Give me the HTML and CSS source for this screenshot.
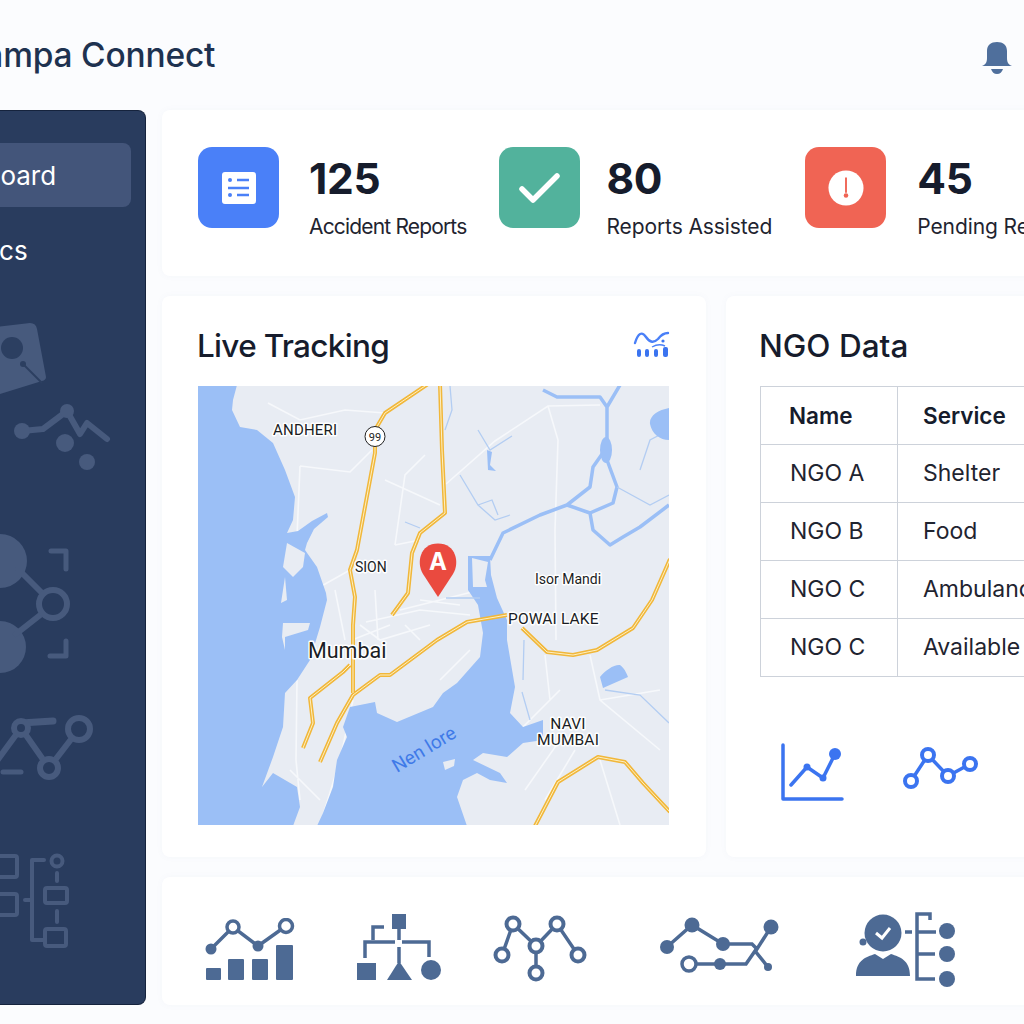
FILE: index.html
```html
<!DOCTYPE html>
<html lang="en">
<head>
<meta charset="utf-8">
<title>Champa Connect</title>
<link rel="stylesheet" href="styles.css">
</head>
<body>
<div class="app">
  <header class="topbar">
    <h1 class="brand">Champa Connect</h1>
    <svg class="bell" viewBox="980 40 34 36" aria-hidden="true">
      <path class="bell-body" d="M982 66c3-1 5-3 5-8v-7c0-6 4-9 10-9s10 3 10 9v7c0 5 2 7 5 8z"/>
      <path class="bell-clap" d="M991 69h12c-1 3-3 5-6 5s-5-2-6-5z"/>
    </svg>
  </header>
  <div class="layout">
    <aside class="sidebar">
      <nav class="nav">
        <a class="nav-item nav-active">Dashboard</a>
        <a class="nav-item nav-second">Analytics</a>
      </nav>
      <svg class="side-art" viewBox="-100 290 246 715" aria-hidden="true">
        <path class="sa-fill" d="M-40 330 L30 322 Q36 322 37 328 L46 376 Q46 379 42 380 L0 393 L-40 398z"/>
        <circle class="sa-dark" cx="12" cy="347" r="11"/>
        <circle class="sa-dark" cx="23" cy="363" r="3"/>
        <path class="sa-darkline" d="M23 363 42 382"/>
        <path class="sa-line" stroke-width="6" d="M22 430 43 428 67 410 80 433 87 422 107 438"/>
        <circle class="sa-fill" cx="22" cy="430" r="8"/>
        <circle class="sa-fill" cx="67" cy="410" r="7"/>
        <circle class="sa-fill" cx="65" cy="442" r="9"/>
        <circle class="sa-fill" cx="87" cy="461" r="8"/>

        <circle class="sa-fill" cx="0" cy="560" r="27"/>
        <circle class="sa-fill" cx="0" cy="646" r="26"/>
        <path class="sa-line" stroke-width="6" d="M18 568 44 594M16 633 44 611"/>
        <circle class="sa-ring" stroke-width="6" cx="53" cy="603" r="14"/>
        <path class="sa-line" stroke-width="5" d="M51 550H66V568M66 640V655H50"/>

        <path class="sa-line" stroke-width="6" d="M-12 772 21 727 49 767 79 728"/>
        <path class="sa-line" stroke-width="7" d="M21 722 53 720"/>
        <path class="sa-line" stroke-width="5" d="M3 771H21"/>
        <circle class="sa-ring" stroke-width="6" cx="21" cy="727" r="7"/>
        <circle class="sa-ring" stroke-width="6" cx="49" cy="767" r="9"/>
        <circle class="sa-ring" stroke-width="6" cx="79" cy="728" r="11"/>

        <rect class="sa-ring" stroke-width="4" x="-12" y="855" width="29" height="21" rx="2"/>
        <rect class="sa-ring" stroke-width="4" x="-12" y="893" width="29" height="21" rx="2"/>
        <path class="sa-line" stroke-width="4" d="M44 859H32V939H43M25 899H32M57 872V880M57 910V921"/>
        <circle class="sa-ring" stroke-width="4" cx="57" cy="860" r="5.5"/>
        <rect class="sa-ring" stroke-width="4" x="45" y="887" width="22" height="15" rx="2"/>
        <rect class="sa-ring" stroke-width="4" x="45" y="928" width="21" height="17" rx="2"/>
      </svg>
    </aside>

    <main class="main">
      <section class="card stats">
        <div class="stat">
          <div class="stat-icon icon-blue">
            <svg class="stat-svg" viewBox="0 0 36 36" aria-hidden="true">
              <rect class="g-white" x="1" y="2" width="34" height="32" rx="3"/>
              <circle class="g-blue" cx="9" cy="10" r="2"/>
              <circle class="g-blue" cx="9" cy="25" r="2"/>
              <path class="l-blue" d="M16 10H28M7 18H28M16 25H28"/>
            </svg>
          </div>
          <div class="stat-text">
            <div class="stat-num">125</div>
            <div class="stat-label label-tight">Accident Reports</div>
          </div>
        </div>
        <div class="stat stat-b">
          <div class="stat-icon icon-green">
            <svg class="stat-svg stat-svg-lg" viewBox="0 0 44 36" aria-hidden="true">
              <path class="l-check" d="M4 19 15 30 39 6"/>
            </svg>
          </div>
          <div class="stat-text">
            <div class="stat-num">80</div>
            <div class="stat-label">Reports Assisted</div>
          </div>
        </div>
        <div class="stat stat-c">
          <div class="stat-icon icon-red">
            <svg class="stat-svg" viewBox="0 0 38 38" aria-hidden="true">
              <circle class="g-white" cx="19" cy="19" r="18.5"/>
              <path class="l-red" d="M19 8V24"/>
              <circle class="g-red" cx="19" cy="27" r="2.4"/>
            </svg>
          </div>
          <div class="stat-text">
            <div class="stat-num">45</div>
            <div class="stat-label">Pending Reports</div>
          </div>
        </div>
      </section>

      <div class="panels">
        <section class="card live">
          <div class="live-head">
            <h2 class="panel-title live-title">Live Tracking</h2>
            <svg class="live-icon" viewBox="632 332 38 30" aria-hidden="true">
              <path class="l-wave" d="M634 345C637 335 641 333 645 339C649 345 653 345 657 341C660 337 663 335 667 335"/>
              <path class="l-wave-s" d="M651 349C656 346 660 346 664 348"/>
              <circle class="g-accent" cx="662" cy="343" r="1.6"/>
              <rect class="g-accent" x="636" y="351" width="4" height="8" rx="2"/>
              <rect class="g-accent" x="644" y="351" width="4" height="8" rx="2"/>
              <rect class="g-accent" x="653" y="351" width="4" height="8" rx="2"/>
              <rect class="g-accent" x="662" y="349" width="5" height="10" rx="2"/>
            </svg>
          </div>
          <svg class="map" viewBox="198 386 471 439" role="img" aria-label="Map of Mumbai">
            <defs>
              <g id="roads">
                <path d="M428 384 385 413 375 430 375 453 357 550 350 570 355 597 353 625V693"/>
                <path d="M440 384 442 450 445 513 420 533 412 553 408 593 392 615"/>
                <path d="M507 615 467 622 437 640 390 675H380L353 695 337 723 320 762"/>
                <path d="M350 665 343 672 310 698 313 723 303 748"/>
                <path d="M522 628 547 652 573 655 597 650 633 628 652 600 670 559"/>
                <path d="M535 826 558 782 598 757 625 762 643 783 670 812"/>
              </g>
            </defs>
            <rect class="m-land" x="198" y="386" width="471" height="439"/>
            <path class="m-road-w" d="M446 484 495 441 548 406 600 405M548 406 558 440 555 530 556 640M268 403 300 420 345 410 385 413M300 466 350 472 372 450M425 455 405 475 395 545M395 545 420 540M385 480 440 505M300 466 296 560M350 570 318 588M366 622 420 610 470 615M352 640 390 625M400 610 480 590M297 680 296 760 300 800M353 700 340 760 320 825M545 655 550 700M590 655 600 700 660 750M545 800 575 750M600 760 620 825M600 700 660 690M360 625 380 640 430 625M335 590 345 640M375 590 378 640M420 600 460 605M405 625 420 640M290 770 320 800M470 650 440 680M510 740 560 690M525 790 560 740"/>
            <path class="m-water" d="M197 385H237L233 400 232 410 240 427 257 430 273 443 285 470 295 497 293 520 287 533 298 531 312 521 327 513 328 517 314 529 307 543 305 550 317 567 326 593 327 600 320 627 310 660 297 680 285 693 283 727 273 757 262 787 273 773 297 787 300 807 293 826H197z"/>
            <path class="m-land" d="M287 543 305 553 303 567 293 577 283 567z"/>
            <path class="m-land" d="M285 577 287 600 281 603z"/>
            <path class="m-land" d="M283 623 310 623 308 630 285 637 285 650 282 637z"/>
            <path class="m-water" d="M468 556 490 556 491 575 497 598 507 620 507 640 515 687 510 713 523 727 543 720 543 740 523 743 507 757 483 753 473 760 500 773 507 783 490 780 477 773 463 780 457 797 467 826H317L323 813 333 787 337 760 347 737 343 727 350 707 375 702 377 713 397 722 433 707 443 693 457 683 480 657 483 633 478 605 468 590Z"/>
            <path class="m-land" d="M472 558 488 562 485 580 487 587 473 587z"/>
            <path class="m-land" d="M443 762 455 759 454 766 445 770z"/>
            <path class="m-water-s" d="M490 560 503 533 540 515 567 505 590 487 593 467 607 447 607 407M567 505 590 513 613 503 617 487 607 460M590 513 593 530 610 545 623 537 640 527 669 505M543 390 557 397 600 397 607 407 620 385"/>
            <ellipse class="m-water" cx="606" cy="450" rx="6" ry="13"/>
            <path class="m-water-t" d="M460 475 478 505 495 520 510 515M478 505 492 500 498 515M445 430 452 410 450 386M478 430 490 450 512 436M617 487 650 505 669 495M640 470 650 440 669 430M405 522 420 528M446 598 480 598M524 640 523 680M522 692 530 720M605 690 640 695 669 723"/>
            <path class="m-water" d="M487 450 492 452 490 465 496 471 488 470zM669 408C658 410 649 416 650 424 652 434 660 440 669 440zM600 677C605 670 615 664 620 665 625 668 628 677 628 677L603 688z"/>
            <use href="#roads" class="m-road-o"/>
            <use href="#roads" class="m-road-i"/>
            <text class="m-label m-andheri" x="273" y="435">ANDHERI</text>
            <circle class="m-badge" cx="375" cy="436.500" r="10"/>
            <text class="m-badge-t" x="375" y="440.500">99</text>
            <text class="m-label m-sm" x="355" y="572">SION</text>
            <text class="m-label m-sm" x="535" y="584">Isor Mandi</text>
            <text class="m-label m-md" x="508" y="624">POWAI LAKE</text>
            <text class="m-label m-big" x="308" y="658">Mumbai</text>
            <text class="m-label m-md m-mid" x="568" y="729">NAVI</text>
            <text class="m-label m-md m-mid" x="568" y="745">MUMBAI</text>
            <text class="m-sea" transform="translate(397 773) rotate(-31)">Nen lore</text>
            <path class="m-pin" d="M438 597 423 574C416 563 420 543.500 438 543.500S460 563 453 574Z"/>
            <text class="m-pin-t" x="438" y="570">A</text>
          </svg>
        </section>

        <section class="card ngo">
          <h2 class="panel-title ngo-title">NGO Data</h2>
          <table class="table">
            <thead>
              <tr><th class="col-a">Name</th><th class="col-b">Service</th></tr>
            </thead>
            <tbody>
              <tr><td>NGO A</td><td>Shelter</td></tr>
              <tr><td>NGO B</td><td>Food</td></tr>
              <tr><td>NGO C</td><td>Ambulance</td></tr>
              <tr><td>NGO C</td><td>Available</td></tr>
            </tbody>
          </table>
          <div class="mini-charts">
            <svg class="mini-a" viewBox="780 742 65 60" aria-hidden="true">
              <path class="l-accent" d="M783 745V799H842"/>
              <path class="l-accent-t" d="M791 785 807 767 823 778 835 754"/>
              <circle class="g-accent" cx="807" cy="767" r="3.500"/>
              <circle class="g-accent" cx="823" cy="778" r="3.500"/>
              <circle class="g-accent" cx="835" cy="754" r="6"/>
            </svg>
            <svg class="mini-b" viewBox="902 745 78 46" aria-hidden="true">
              <path class="l-accent" d="M911 781 928 755 948 776 970 764"/>
              <circle class="ring-accent" cx="911" cy="781" r="6"/>
              <circle class="ring-accent" cx="928" cy="755" r="6"/>
              <circle class="ring-accent" cx="948" cy="776" r="6"/>
              <circle class="ring-accent" cx="970" cy="764" r="6"/>
            </svg>
          </div>
        </section>
      </div>

      <section class="card tools">
        <svg class="t1" viewBox="205 918 90 64" aria-hidden="true">
          <rect class="g-slate" x="206" y="968" width="15" height="12" rx="1"/>
          <rect class="g-slate" x="228" y="959" width="16" height="21" rx="1"/>
          <rect class="g-slate" x="252" y="959" width="16" height="21" rx="1"/>
          <rect class="g-slate" x="276" y="945" width="17" height="35" rx="1"/>
          <path class="l-slate" d="M211 949 233 927 258 946 286 926"/>
          <circle class="g-slate" cx="211" cy="949" r="5.500"/>
          <circle class="g-slate" cx="258" cy="946" r="5.500"/>
          <circle class="ring-slate" cx="233" cy="927" r="6"/>
          <circle class="ring-slate" cx="286" cy="926" r="6.500"/>
        </svg>
        <svg class="t2" viewBox="356 912 86 70" aria-hidden="true">
          <rect class="g-slate" x="392" y="914" width="14" height="15"/>
          <path class="l-slate" d="M399 929V940M395 942H365V958M402 942H429V957M373 940V927H384M399 947V963"/>
          <rect class="g-slate" x="357" y="963" width="19" height="17"/>
          <path class="g-slate" d="M399 961 412 980H387z"/>
          <circle class="g-slate" cx="431" cy="970" r="10"/>
        </svg>
        <svg class="t3" viewBox="493 914 95 68" aria-hidden="true">
          <path class="l-slate" d="M502 955 513 924 536 946 557 924 578 955M536 946V973"/>
          <circle class="ring-slate ring-thick" cx="513" cy="924" r="6.500"/>
          <circle class="ring-slate ring-thick" cx="502" cy="955" r="6.500"/>
          <circle class="ring-slate ring-thick" cx="536" cy="946" r="6.500"/>
          <circle class="ring-slate ring-thick" cx="557" cy="924" r="6.500"/>
          <circle class="ring-slate ring-thick" cx="578" cy="955" r="6.500"/>
          <circle class="ring-slate ring-thick" cx="536" cy="973" r="6.500"/>
        </svg>
        <svg class="t4" viewBox="659 916 121 58" aria-hidden="true">
          <path class="l-slate" d="M667 947 692 925 723 944H752L757 949 771 927"/>
          <path class="l-slate" d="M689 964H746L755 951 768 967"/>
          <circle class="g-slate" cx="667" cy="947" r="7"/>
          <circle class="g-slate" cx="692" cy="925" r="7.500"/>
          <circle class="g-slate" cx="723" cy="944" r="7"/>
          <circle class="g-slate" cx="771" cy="927" r="7.500"/>
          <circle class="ring-slate" cx="689" cy="964" r="7"/>
          <circle class="g-slate" cx="720" cy="964" r="6"/>
          <circle class="g-slate" cx="768" cy="967" r="4"/>
        </svg>
        <svg class="t5" viewBox="855 912 102 76" aria-hidden="true">
          <circle class="g-slate" cx="883" cy="933" r="18.500"/>
          <circle class="g-slate" cx="863" cy="942" r="3.500"/>
          <path class="l-white" d="M876 933 882 938 890 928"/>
          <path class="g-slate" d="M856 976C856 960 866 957 875 954L883 959 891 954C900 957 910 960 910 976Z"/>
          <path class="l-slate" d="M930 920V914H917V979H935M917 932H936M905 932H912M917 954H935"/>
          <circle class="g-slate" cx="947" cy="931" r="8"/>
          <circle class="g-slate" cx="947" cy="954" r="8"/>
          <circle class="g-slate" cx="947" cy="979" r="8"/>
        </svg>
      </section>
    </main>
  </div>
</div>
</body>
</html>
```

FILE: styles.css
```css
* { box-sizing: border-box; }
html, body { margin: 0; padding: 0; }
body {
  background: #fbfcfe;
  font-family: Inter, "Noto Sans", sans-serif;
  color: #161c2c;
}
svg { display: block; }

.app { width: 1024px; height: 1024px; overflow: hidden; background: #fbfcfe; }

/* top bar */
.topbar {
  height: 110px;
  display: flex;
  align-items: center;
  justify-content: space-between;
  padding-right: 10px;
}
.brand {
  margin: 0 0 0 -60px;
  font-size: 33.500px;
  font-weight: 500;
  letter-spacing: -0.2px;
  color: #1e3250;
  white-space: nowrap;
}
.bell { width: 34px; height: 36px; margin-top: 6px; }
.bell-body { fill: #4f6f9c; }
.bell-clap { fill: #4f6f9c; }

/* layout */
.layout { display: flex; gap: 16px; margin-left: -100px; }

/* sidebar */
.sidebar {
  flex: none;
  width: 246px;
  height: 895px;
  background: #293c5e;
  border-radius: 8px;
  border-right: 1px solid #15233d;
  border-bottom: 1px solid #15233d;
  border-top: 1px solid #15233d;
  padding-top: 32px;
  overflow: hidden;
}
.nav { display: flex; flex-direction: column; gap: 11px; padding-right: 14px; }
.nav-item {
  display: flex;
  align-items: center;
  height: 64px;
  padding-left: 22px;
  border-radius: 8px;
  color: #fff;
  font-size: 26px;
}
.nav-second { padding-left: 15px; }
.nav-active { background: #43557a; }
.side-art { width: 246px; height: 715px; margin-top: 9px; }
.sa-fill { fill: #475a7d; }
.sa-dark { fill: #2c3f61; }
.sa-darkline { stroke: #2c3f61; stroke-width: 2; fill: none; }
.sa-line { fill: none; stroke: #475a7d; stroke-linecap: round; stroke-linejoin: round; }
.sa-ring { fill: #293c5e; stroke: #475a7d; }

/* main */
.main { flex: none; width: 1000px; display: flex; flex-direction: column; gap: 20px; }
.card { background: #fff; border-radius: 8px; box-shadow: 0 0 6px rgba(120, 140, 180, .05); }

/* stats */
.stats { height: 166px; display: flex; align-items: flex-start; gap: 33px; padding: 37px 0 0 36px; }
.stat { display: flex; align-items: flex-start; gap: 30px; white-space: nowrap; flex: none; }
.stat-b { gap: 26px; }
.stat-c { gap: 31px; }
.stat-icon {
  width: 81px;
  height: 81px;
  border-radius: 14px;
  display: flex;
  align-items: center;
  justify-content: center;
  flex: none;
}
.icon-blue { background: #4a80f8; }
.icon-green { background: #52b29c; }
.icon-red { background: #f06454; }
.stat-svg { width: 36px; height: 36px; }
.stat-svg-lg { width: 44px; height: 36px; }
.stat-text { padding-top: 5px; }
.stat-num { font-size: 42.500px; font-weight: 700; line-height: 54px; letter-spacing: -0.3px; color: #161c2c; }
.stat-label { font-size: 21px; font-weight: 400; line-height: 30px; margin-top: 6px; color: #1f2430; letter-spacing: -0.1px; }
.label-tight { letter-spacing: -0.83px; }
.g-white { fill: #fff; }
.g-blue { fill: #4a80f8; }
.g-red { fill: #f06454; }
.l-blue { fill: none; stroke: #4a80f8; stroke-width: 2.4; }
.l-check { fill: none; stroke: #fff; stroke-width: 5.5; stroke-linecap: round; stroke-linejoin: round; }
.l-red { fill: none; stroke: #f06454; stroke-width: 2; }

/* panels */
.panels { display: flex; gap: 20px; height: 561px; }
.live { flex: none; width: 544px; padding: 0 36px; }
.live-head { height: 90px; display: flex; align-items: center; justify-content: space-between; padding-top: 8px; }
.panel-title { margin: 0; margin-left: -1px; font-size: 31.500px; font-weight: 500; color: #161c2c; white-space: nowrap; }
.live-title { letter-spacing: -0.7px; }
.live-icon { width: 38px; height: 30px; margin-right: -1px; }
.l-wave { fill: none; stroke: #4a80f8; stroke-width: 2.4; stroke-linecap: round; }
.l-wave-s { fill: none; stroke: #4a80f8; stroke-width: 1.4; }
.g-accent { fill: #3b74f0; }

/* map */
.map { width: 471px; height: 439px; }
.m-land { fill: #e8ecf3; }
.m-water { fill: #9bbff6; }
.m-water-s { fill: none; stroke: #9bbff6; stroke-width: 3.500; stroke-linejoin: round; }
.m-water-t { fill: none; stroke: #b3cdf2; stroke-width: 1.300; }
.m-road-w { fill: none; stroke: #f6f8fb; stroke-width: 1.600; }
.m-road-o { fill: none; stroke: #f1b73a; stroke-width: 4; stroke-linejoin: round; }
.m-road-i { fill: none; stroke: #fdf0c4; stroke-width: 1; stroke-linejoin: round; }
.m-label {
  font-family: Roboto, Inter, sans-serif;
  fill: #1a1d24;
  paint-order: stroke;
  stroke: #fff;
  stroke-width: 3px;
  stroke-linejoin: round;
}
.m-andheri { font-size: 15px; letter-spacing: .2px; }
.m-sm { font-size: 14px; }
.m-md { font-size: 15.500px; letter-spacing: .15px; }
.m-mid { text-anchor: middle; }
.m-big { font-size: 21.500px; }
.m-badge { fill: #fff; stroke: #222; stroke-width: 1; }
.m-badge-t { font-family: Roboto, sans-serif; font-size: 11px; fill: #222; text-anchor: middle; }
.m-sea { font-family: Roboto, sans-serif; font-size: 19px; fill: #3f7ae8; }
.m-pin { fill: #ea4a3f; }
.m-pin-t { font-family: Inter, sans-serif; font-size: 24px; font-weight: 700; fill: #fff; text-anchor: middle; }

/* NGO */
.ngo { flex: none; width: 440px; padding-left: 34px; }
.ngo-title { height: 90px; line-height: 100px; margin-left: -1px; }
.table { border-collapse: collapse; table-layout: fixed; width: 400px; font-size: 23px; color: #1f2430; }
.table th, .table td { border: 1px solid #cdd2da; height: 58px; text-align: left; padding: 0 0 2px 29px; white-space: nowrap; font-weight: 400; }
.table th { font-weight: 600; font-size: 22.500px; color: #161c2c; padding: 0 0 0 28px; }
.table th + th, .table td + td { padding-left: 25px; }
.col-a { width: 137px; }
.col-b { width: 263px; }
.mini-charts { display: flex; align-items: flex-start; margin-top: 65px; padding-left: 20px; }
.mini-a { width: 65px; height: 60px; }
.mini-b { width: 78px; height: 46px; margin-left: 57px; margin-top: 3px; }
.l-accent { fill: none; stroke: #3b74f0; stroke-width: 3.500; stroke-linecap: round; stroke-linejoin: round; }
.l-accent-t { fill: none; stroke: #3b74f0; stroke-width: 3.500; stroke-linecap: round; stroke-linejoin: round; }
.ring-accent { fill: #fff; stroke: #3b74f0; stroke-width: 4; }

/* tools */
.tools {
  height: 128px;
  display: grid;
  grid-template-columns: 152px 137px 166px 196px 102px;
  align-items: start;
  padding-left: 43px;
}
.t1 { width: 90px; height: 64px; margin-top: 41px; }
.t2 { width: 86px; height: 70px; margin-top: 35px; margin-left: -1px; }
.t3 { width: 95px; height: 68px; margin-top: 37px; margin-left: -1px; }
.t4 { width: 121px; height: 58px; margin-top: 39px; margin-left: -1px; }
.t5 { width: 102px; height: 76px; margin-top: 35px; margin-left: -1px; }
.g-slate { fill: #4d6a94; }
.l-slate { fill: none; stroke: #4d6a94; stroke-width: 3.500; }
.l-white { fill: none; stroke: #fff; stroke-width: 3; }
.ring-slate { fill: #fff; stroke: #4d6a94; stroke-width: 3.500; }
.ring-thick { stroke-width: 4; }
```
